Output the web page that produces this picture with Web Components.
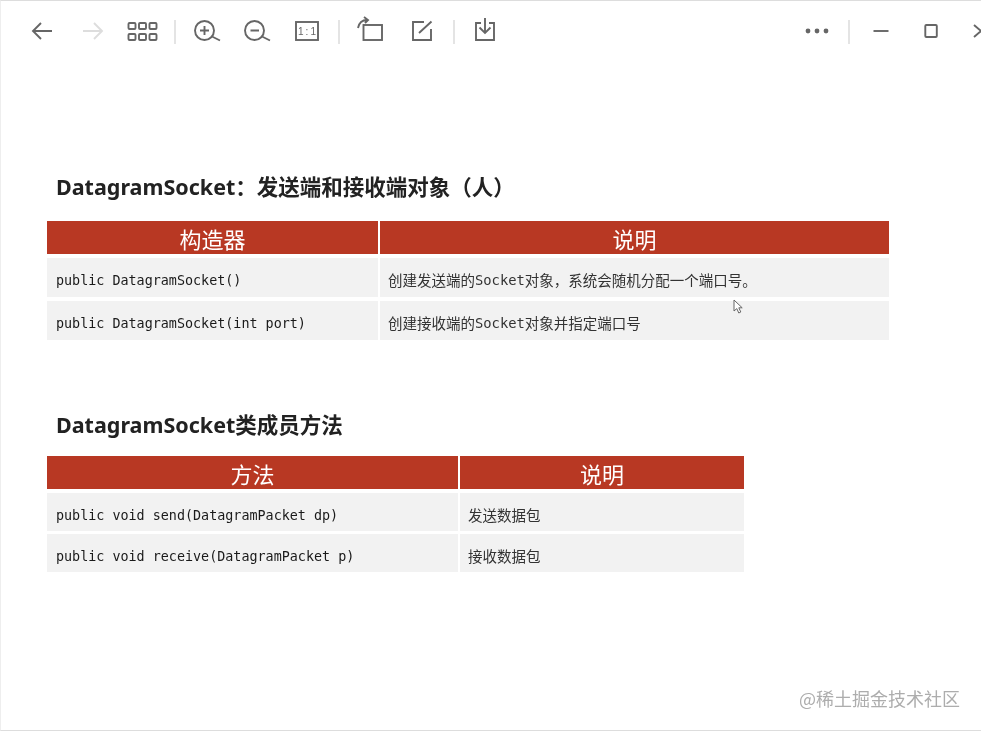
<!DOCTYPE html>
<html lang="zh">
<head>
<meta charset="utf-8">
<title>DatagramSocket</title>
<style>
  html, body { margin: 0; height: 100%; background: #fff; overflow: hidden; }
</style>
</head>
<body>
<viewer-window>
  <viewer-toolbar></viewer-toolbar>

  <slide-section title-text="DatagramSocket&#xFF1A;发送端和接收端对象&#xFF08;人&#xFF09;" top="108" gap="17">
    <data-table cols="331px 509px" row="39px" head-row="33px" row-gap="4px">
      <table-cell head>构造器</table-cell>
      <table-cell head>说明</table-cell>
      <table-cell mono>public DatagramSocket()</table-cell>
      <table-cell>创建发送端的<code-run>Socket</code-run>对象&#xFF0C;系统会随机分配一个端口号。</table-cell>
      <table-cell mono>public DatagramSocket(int port)</table-cell>
      <table-cell>创建接收端的<code-run>Socket</code-run>对象并指定端口号</table-cell>
    </data-table>
  </slide-section>

  <slide-section title-text="DatagramSocket类成员方法" top="68" gap="14">
    <data-table cols="411px 284px" row="38px" head-row="34px" row-gap="3px">
      <table-cell head>方法</table-cell>
      <table-cell head>说明</table-cell>
      <table-cell mono>public void send(DatagramPacket dp)</table-cell>
      <table-cell>发送数据包</table-cell>
      <table-cell mono>public void receive(DatagramPacket p)</table-cell>
      <table-cell>接收数据包</table-cell>
    </data-table>
  </slide-section>

  <mouse-cursor></mouse-cursor>
  <water-mark>@稀土掘金技术社区</water-mark>
</viewer-window>

<script>
const ICONS = {
  back: `<path d="M10 0H-8.5M-1 -8L-9 0L-1 8"/>`,
  forward: `<path d="M-9 0H9.5M2 -8L10 0L2 8"/>`,
  grid: `<rect x="-13.5" y="-8" width="7" height="6" rx="1"/><rect x="-3" y="-8" width="7" height="6" rx="1"/><rect x="7.5" y="-8" width="7" height="6" rx="1"/>
         <rect x="-13.5" y="3" width="7" height="6" rx="1"/><rect x="-3" y="3" width="7" height="6" rx="1"/><rect x="7.5" y="3" width="7" height="6" rx="1"/>`,
  zoomIn: `<circle cx="-2.5" cy="-0.5" r="9.5"/><path d="M5 5.5L13 9.5M-7 -0.5H2M-2.5 -5V4"/>`,
  zoomOut: `<circle cx="-2.5" cy="-0.5" r="9.5"/><path d="M5 5.5L13 9.5M-6.5 -0.5H2"/>`,
  actual: `<rect x="-11" y="-9" width="22" height="18"/>
           <text x="1" y="3.5" text-anchor="middle" font-family="Liberation Sans, sans-serif" font-size="10" letter-spacing="2" fill="#666" stroke="none">1:1</text>`,
  rotate: `<rect x="-7.5" y="-6" width="18.5" height="15"/><path d="M-13 -3C-12 -8 -9 -11 -4 -11M-7 -14L-3 -11L-6 -8"/>`,
  edit: `<path d="M3 -9H-8V9H10V-2M-2 2L10.5 -9.5"/>`,
  save: `<path d="M-5 -8H-10V9H8V-8H3M-1 -13V2M-6.5 -3.5L-1 2L4.5 -3.5"/>`,
  more: `<g fill="#666" stroke="none"><circle cx="-9" r="2.4"/><circle r="2.4"/><circle cx="9" r="2.4"/></g>`,
  minimize: `<path d="M-7.5 0H7.5"/>`,
  maximize: `<rect x="-5.7" y="-6" width="11.5" height="12" rx="1"/>`,
  close: `<path d="M-7 -6L7 6M7 -6L-7 6"/>`
};

class ViewerWindow extends HTMLElement {
  constructor() {
    super();
    this.attachShadow({ mode: "open" });
  }

  connectedCallback() {
    this.shadowRoot.innerHTML = `
      <style>
        :host {
          display: block;
          position: relative;
          height: 731px;
          box-sizing: border-box;
          overflow: hidden;
          background: #fff;
          border-top: 1px solid #ddd;
          border-bottom: 1px solid #ddd;
          border-left: 1px solid #eee;
          color: #222;
          filter: blur(0.35px);
        }
      </style>
      <slot></slot>
    `;
  }
}

class ToolIcon extends HTMLElement {
  constructor() {
    super();
    this.attachShadow({ mode: "open" });
  }

  connectedCallback() {
    const name = this.getAttribute("name");
    const color = this.hasAttribute("dim") ? "#ddd" : "#666";
    this.shadowRoot.innerHTML = `
      <style>
        :host { display: block; width: 50px; height: 61px; flex: none; }
        svg { display: block; }
      </style>
      <svg width="50" height="61" viewBox="-25 -30 50 61" fill="none" stroke="${color}" stroke-width="1.9">${ICONS[name]}</svg>
    `;
  }
}

class ViewerToolbar extends HTMLElement {
  constructor() {
    super();
    this.attachShadow({ mode: "open" });
  }

  connectedCallback() {
    this.shadowRoot.innerHTML = `
      <style>
        :host {
          display: flex;
          align-items: center;
          height: 61px;
          width: 1005px;
          box-sizing: border-box;
          padding-left: 16px;
        }
        .sep { width: 14px; height: 24px; flex: none; }
        .sep.wide { margin-left: 1px; }
        .sep::after {
          content: "";
          display: block;
          width: 2px;
          height: 24px;
          margin: 0 auto;
          background: #e4e4e4;
        }
        .push { margin-left: auto; }
      </style>
      <tool-icon name="back"></tool-icon>
      <tool-icon name="forward" dim></tool-icon>
      <tool-icon name="grid"></tool-icon>
      <div class="sep wide"></div>
      <tool-icon name="zoomIn"></tool-icon>
      <tool-icon name="zoomOut"></tool-icon>
      <tool-icon name="actual"></tool-icon>
      <div class="sep"></div>
      <tool-icon name="rotate"></tool-icon>
      <tool-icon name="edit"></tool-icon>
      <div class="sep wide"></div>
      <tool-icon name="save"></tool-icon>
      <tool-icon class="push" name="more"></tool-icon>
      <div class="sep"></div>
      <tool-icon name="minimize"></tool-icon>
      <tool-icon name="maximize"></tool-icon>
      <tool-icon name="close"></tool-icon>
    `;
  }
}

class SlideSection extends HTMLElement {
  constructor() {
    super();
    this.attachShadow({ mode: "open" });
  }

  connectedCallback() {
    const title = this.getAttribute("title-text");
    this.shadowRoot.innerHTML = `
      <style>
        :host {
          display: block;
          margin-top: ${this.getAttribute("top")}px;
          padding-left: 46px;
        }
        h2 {
          margin: 0 0 ${this.getAttribute("gap")}px 9px;
          height: 34px;
          line-height: 34px;
          font-family: "Noto Sans", "Noto Sans CJK SC", sans-serif;
          font-size: 21.5px;
          font-weight: 700;
          color: #222;
          white-space: nowrap;
        }
      </style>
      <h2>${title}</h2>
      <slot></slot>
    `;
  }
}

class DataTable extends HTMLElement {
  constructor() {
    super();
    this.attachShadow({ mode: "open" });
  }

  connectedCallback() {
    this.shadowRoot.innerHTML = `
      <style>
        :host {
          display: grid;
          width: max-content;
          grid-template-columns: ${this.getAttribute("cols")};
          grid-template-rows: ${this.getAttribute("head-row")};
          grid-auto-rows: ${this.getAttribute("row")};
          column-gap: 2px;
          row-gap: ${this.getAttribute("row-gap")};
        }
      </style>
      <slot></slot>
    `;
  }
}

class TableCell extends HTMLElement {
  constructor() {
    super();
    this.attachShadow({ mode: "open" });
  }

  connectedCallback() {
    this.shadowRoot.innerHTML = `
      <style>
        :host {
          display: flex;
          align-items: center;
          box-sizing: border-box;
          padding: 4px 0 0 8px;
          background: #f2f2f2;
          color: #333;
          white-space: nowrap;
          font-family: "Noto Sans CJK SC", sans-serif;
          font-size: 14.5px;
        }
        :host([head]) {
          justify-content: center;
          align-self: start;
          height: 33px;
          padding: 0;
          background: #b83823;
          color: #fff;
          font-size: 22px;
        }
        :host([mono]) {
          padding: 6px 0 0 9px;
          font-family: "DejaVu Sans Mono", "Liberation Mono", monospace;
          font-size: 13.4px;
          color: #1a1a1a;
        }
      </style>
      <slot></slot>
    `;
  }
}

class CodeRun extends HTMLElement {
  constructor() {
    super();
    this.attachShadow({ mode: "open" });
  }

  connectedCallback() {
    this.shadowRoot.innerHTML = `
      <style>
        :host {
          display: inline;
          font-family: "DejaVu Sans Mono", "Liberation Mono", monospace;
          font-size: 13.8px;
        }
      </style>
      <slot></slot>
    `;
  }
}

class MouseCursor extends HTMLElement {
  constructor() {
    super();
    this.attachShadow({ mode: "open" });
  }

  connectedCallback() {
    this.shadowRoot.innerHTML = `
      <style>
        :host { position: absolute; left: 732px; top: 298px; width: 11px; height: 16px; }
        svg { display: block; }
      </style>
      <svg width="11" height="16" viewBox="0 0 11 16">
        <path d="M1 1V12L3.8 9.6L5.8 14L7.8 13L5.8 8.8H9.2Z" fill="#fff" stroke="#666" stroke-width="1"/>
      </svg>
    `;
  }
}

class WaterMark extends HTMLElement {
  constructor() {
    super();
    this.attachShadow({ mode: "open" });
  }

  connectedCallback() {
    this.shadowRoot.innerHTML = `
      <style>
        :host {
          position: absolute;
          right: 21px;
          top: 685px;
          font-family: "Noto Sans CJK SC", sans-serif;
          font-size: 18px;
          line-height: 24px;
          color: #adadad;
          white-space: nowrap;
        }
      </style>
      <slot></slot>
    `;
  }
}

customElements.define("viewer-window", ViewerWindow);
customElements.define("tool-icon", ToolIcon);
customElements.define("viewer-toolbar", ViewerToolbar);
customElements.define("slide-section", SlideSection);
customElements.define("data-table", DataTable);
customElements.define("table-cell", TableCell);
customElements.define("code-run", CodeRun);
customElements.define("mouse-cursor", MouseCursor);
customElements.define("water-mark", WaterMark);
</script>
</body>
</html>
